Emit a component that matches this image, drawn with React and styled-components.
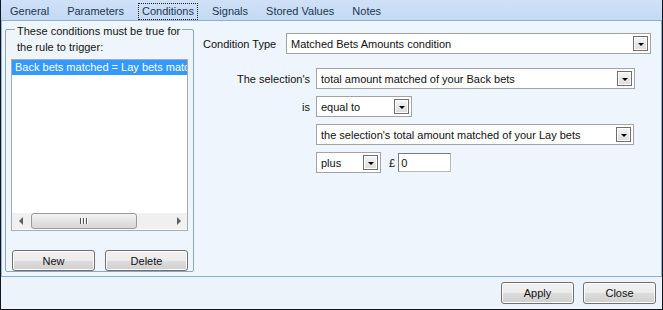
import React from "react";
import styled, { createGlobalStyle } from "styled-components";

const GlobalStyle = createGlobalStyle`
  body {
    margin: 0;
    font-family: "Liberation Sans", Arial, sans-serif;
    font-size: 11px;
    color: #111;
  }
`;

const tabs = ["General", "Parameters", "Conditions", "Signals", "Stored Values", "Notes"];

const App = () => {
  return (
    <>
      <GlobalStyle />
      <Window>
        <TabStrip>
          {tabs.map((t) => (
            <Tab key={t}>
              <TabLabel active={t === "Conditions"}>{t}</TabLabel>
            </Tab>
          ))}
        </TabStrip>

        <Pane>
          <Group>
            <Legend>
              These conditions must be true for
              <br />
              the rule to trigger:
            </Legend>
            <ListBox>
              <ListItems>
                <ListItem selected>Back bets matched = Lay bets matched</ListItem>
              </ListItems>
              <HScroll>
                <ArrowBtn>
                  <Tri dir="left" />
                </ArrowBtn>
                <Track>
                  <Thumb>
                    <Grip />
                    <Grip />
                    <Grip />
                  </Thumb>
                </Track>
                <ArrowBtn>
                  <Tri dir="right" />
                </ArrowBtn>
              </HScroll>
            </ListBox>
            <GroupButtons>
              <Button w={84}>New</Button>
              <Button w={84}>Delete</Button>
            </GroupButtons>
          </Group>

          <Editor>
            <TypeRow>
              <TypeLabel>Condition Type</TypeLabel>
              <Combo w={365}>
                <ComboText>Matched Bets Amounts condition</ComboText>
                <DropBtn />
              </Combo>
            </TypeRow>

            <Form>
              <FieldLabel>The selection's</FieldLabel>
              <Combo w={319}>
                <ComboText>total amount matched of your Back bets</ComboText>
                <DropBtn />
              </Combo>

              <FieldLabel>is</FieldLabel>
              <Combo w={96}>
                <ComboText>equal to</ComboText>
                <DropBtn />
              </Combo>

              <span />
              <Combo w={318}>
                <ComboText>the selection's total amount matched of your Lay bets</ComboText>
                <DropBtn />
              </Combo>

              <span />
              <AmountRow>
                <Combo w={65}>
                  <ComboText>plus</ComboText>
                  <DropBtn />
                </Combo>
                <Pound>£</Pound>
                <TextInput>0</TextInput>
              </AmountRow>
            </Form>
          </Editor>
        </Pane>

        <Footer>
          <Button w={73} h={22}>Apply</Button>
          <Button w={73} h={22}>Close</Button>
        </Footer>
      </Window>
    </>
  );
};

export default App;

const Window = styled.div`
  width: 663px;
  height: 310px;
  box-sizing: border-box;
  border: 1px solid #0e1620;
  border-top: none;
  background: #ecf3fb;
  display: flex;
  flex-direction: column;
`;

const TabStrip = styled.div`
  height: 20px;
  display: flex;
  align-items: center;
  background: linear-gradient(#cfe1f7, #c4daf4);
  color: #1e3553;
`;

const Tab = styled.div`
  padding: 0 5px;
  height: 20px;
  display: flex;
  align-items: center;
`;

const TabLabel = styled.span`
  padding: 1px 3px 2px;
  border: 1px dotted ${(p) => (p.active ? "#222" : "transparent")};
  margin-top: 3px;
`;

const Pane = styled.div`
  height: 257px;
  box-sizing: border-box;
  border: 1px solid #8fafd2;
  border-left-color: #9ab7d8;
  background: #eef5fd;
  display: flex;
  padding: 3px 0 0 3px;
`;

const Group = styled.div`
  width: 189px;
  height: 243px;
  margin-top: 5px;
  box-sizing: border-box;
  border: 1px solid #8ea6bf;
  border-radius: 2px;
  display: flex;
  flex-direction: column;
  padding: 0 5px;
`;

const Legend = styled.div`
  align-self: flex-start;
  margin: -7px 0 0 4px;
  padding: 0 2px;
  background: #eef5fd;
  line-height: 16px;
  color: #141414;
`;

const ListBox = styled.div`
  margin-top: 4px;
  height: 172px;
  box-sizing: border-box;
  border: 1px solid #a5acb5;
  background: #fff;
  display: flex;
  flex-direction: column;
`;

const ListItems = styled.div`
  flex: 1;
  overflow: hidden;
`;

const ListItem = styled.div`
  height: 15px;
  line-height: 15px;
  padding-left: 3px;
  white-space: nowrap;
  overflow: hidden;
  background: ${(p) => (p.selected ? "#3399ff" : "transparent")};
  color: ${(p) => (p.selected ? "#fff" : "#111")};
`;

const HScroll = styled.div`
  height: 16px;
  display: flex;
  align-items: stretch;
  background: #f0f0f0;
  margin-bottom: 1px;
`;

const ArrowBtn = styled.div`
  width: 17px;
  display: flex;
  align-items: center;
  justify-content: center;
`;

const Tri = styled.span`
  width: 0;
  height: 0;
  border-top: 4px solid transparent;
  border-bottom: 4px solid transparent;
  ${(p) =>
    p.dir === "left"
      ? "border-right: 4px solid #606060;"
      : "border-left: 4px solid #606060;"}
`;

const Track = styled.div`
  flex: 1;
  display: flex;
  padding: 0 0 0 2px;
`;

const Thumb = styled.div`
  width: 106px;
  box-sizing: border-box;
  border: 1px solid #999;
  border-radius: 3px;
  background: linear-gradient(#f3f3f3, #e4e4e4 50%, #d6d6d6);
  display: flex;
  justify-content: center;
  align-items: center;
  gap: 1px;
`;

const Grip = styled.span`
  width: 1px;
  height: 6px;
  background: #555;
  border-right: 1px solid #fff;
`;

const GroupButtons = styled.div`
  display: flex;
  gap: 10px;
  margin-top: 19px;
  padding-left: 1px;
`;

const Button = styled.div`
  width: ${(p) => p.w}px;
  height: ${(p) => p.h || 21}px;
  box-sizing: border-box;
  border: 1px solid #707070;
  border-radius: 3px;
  background: linear-gradient(#f2f2f2, #ebebeb 50%, #dddddd 51%, #cfcfcf);
  box-shadow: inset 0 0 0 1px #fcfcfc;
  display: flex;
  align-items: center;
  justify-content: center;
  color: #111;
`;

const Editor = styled.div`
  flex: 1;
  display: flex;
  flex-direction: column;
  padding: 9px 0 0 9px;
`;

const TypeRow = styled.div`
  display: flex;
  align-items: center;
`;

const TypeLabel = styled.span`
  width: 83px;
`;

const Combo = styled.div`
  width: ${(p) => p.w}px;
  height: 21px;
  box-sizing: border-box;
  border: 1px solid #a3a3a3;
  background: #fff;
  display: flex;
  align-items: center;
  padding: 0 2px 0 4px;
`;

const ComboText = styled.span`
  flex: 1;
  white-space: nowrap;
  overflow: hidden;
`;

const DropBtn = styled.span`
  width: 15px;
  height: 15px;
  box-sizing: border-box;
  border: 1px solid #6f6f6f;
  background: linear-gradient(#f5f5f5, #dcdcdc);
  box-shadow: inset 0 0 0 1px #fff;
  display: flex;
  align-items: center;
  justify-content: center;
  &::after {
    content: "";
    width: 0;
    height: 0;
    border-left: 3px solid transparent;
    border-right: 3px solid transparent;
    border-top: 3px solid #000;
    margin-top: 1px;
  }
`;

const Form = styled.div`
  display: grid;
  grid-template-columns: 107px auto;
  column-gap: 6px;
  row-gap: 7px;
  align-items: center;
  justify-items: start;
  margin: 14px 0 0 0;
`;

const FieldLabel = styled.span`
  justify-self: end;
`;

const AmountRow = styled.div`
  display: flex;
  align-items: center;
`;

const Pound = styled.span`
  margin: 0 3px 0 8px;
`;

const TextInput = styled.div`
  width: 53px;
  height: 19px;
  box-sizing: border-box;
  border: 1px solid #b9b9b9;
  border-top-color: #7a7a7a;
  border-left-color: #7a7a7a;
  background: #fff;
  display: flex;
  align-items: center;
  padding-left: 2px;
`;

const Footer = styled.div`
  flex: 1;
  display: flex;
  justify-content: flex-end;
  align-items: flex-start;
  gap: 9px;
  padding: 5px 6px 0 0;
  background: #ecf3fb;
`;
